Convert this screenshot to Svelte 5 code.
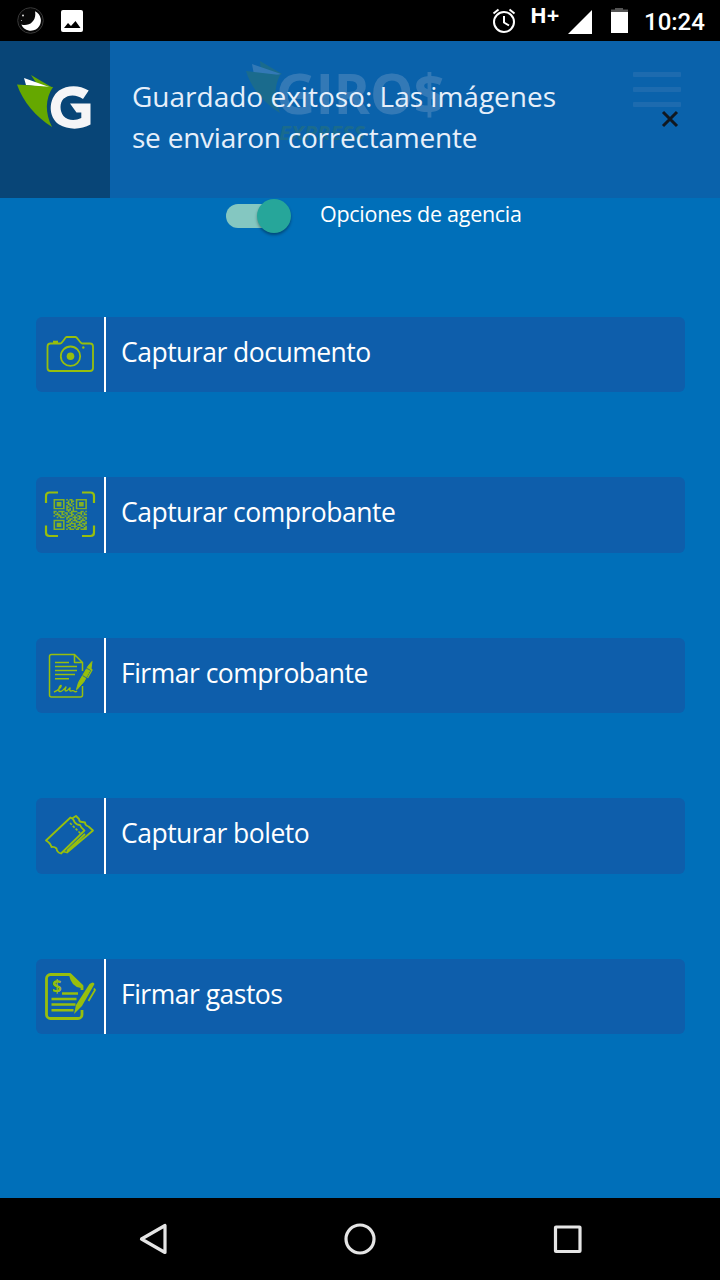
<script>
	let agencyOptions = true

	const actions = [
		{ icon: "camera", label: "Capturar documento" },
		{ icon: "qr", label: "Capturar comprobante" },
		{ icon: "sign", label: "Firmar comprobante" },
		{ icon: "ticket", label: "Capturar boleto" },
		{ icon: "expense", label: "Firmar gastos" },
	]

	const qrRows = [
		"111111101011001111111",
		"100000100101101000001",
		"101110101101001011101",
		"101110100110101011101",
		"101110101011001011101",
		"100000101100101000001",
		"111111101010101111111",
		"000000001110100000000",
		"110111100101111001101",
		"101001011011000111010",
		"011101101001101001011",
		"100110010111010110100",
		"001011101100111011011",
		"000000001011010110101",
		"111111100110111001110",
		"100000101101001111001",
		"101110100011110010111",
		"101110101110010111010",
		"101110101001111001101",
		"100000100110010110011",
		"111111101011101101111",
	]

	const qrPath = qrRows
		.flatMap((row, y) =>
			[...row].map((cell, x) => (cell === "1" ? `M${x} ${y}h1v1h-1z` : ""))
		)
		.join("")
</script>

<div class="screen">
	<div class="status-bar">
		<svg class="moon" width="28" height="28" viewBox="0 0 28 28">
			<circle cx="13.5" cy="13.5" r="12.8" fill="#080808" stroke="#383838" />
			<path d="M18 4.300A10.200 10.200 0 1 1 4.300 17.500C12 20 20 14 18 4.300Z" fill="#fff" />
			<circle cx="6" cy="8.500" r="1" fill="#ddd" />
			<circle cx="4.500" cy="13.500" r=".6" fill="#aaa" />
		</svg>
		<svg class="picture" width="22" height="22" viewBox="0 0 22 22">
			<rect width="22" height="22" rx="2" fill="#fff" />
			<path d="M3 18l4-5 3 3 4.500-5 5 7z" fill="#000" />
		</svg>
		<svg class="alarm" width="24" height="26" viewBox="0 0 24 26" fill="none" stroke="#fff" stroke-width="2">
			<circle cx="12" cy="14" r="10" />
			<path d="M12 8v6.500l5 3M1.500 5.500l5-4M22.500 5.500l-5-4" />
		</svg>
		<span class="network">H+</span>
		<svg class="signal" width="24" height="24" viewBox="0 0 24 24">
			<path d="M0 24L24 0v24z" fill="#fff" />
		</svg>
		<svg class="battery" width="17" height="25" viewBox="0 0 17 25">
			<path d="M0 4V1.500h4V0h8v1.500h5V4z" fill="#555" />
			<path d="M0 4h17v21H0z" fill="#fff" />
		</svg>
		<span class="clock">10:24</span>
	</div>

	<main>
		<header>
			<svg class="brand" width="220" height="90" viewBox="0 0 220 90">
				<path d="M30 0l22 13-20 8z" fill="#65a800" />
				<path d="M22 3l29 10-26 6z" fill="#fff" />
				<path d="M16 10l34 4c-6 12-6 24 0 38C34 42 21 27 16 10z" fill="#65a800" />
				<text class="giros" x="46" y="52.500" textLength="169" lengthAdjust="spacingAndGlyphs">GIRO$</text>
				<text class="express" x="49" y="79" textLength="86" lengthAdjust="spacingAndGlyphs">EXPRESS</text>
			</svg>
			<div class="menu">
				<span></span>
				<span></span>
				<span></span>
			</div>
		</header>

		<div class="toast">
			<div class="toast-logo">
				<svg width="76" height="56" viewBox="0 0 76 56">
					<path d="M14 0l22 13-12 2z" fill="#65a800" />
					<path d="M7 3l28 10-26-3z" fill="#fff" />
					<path d="M0 9.500l36 2.500c-8 12-8 26-1 40C19 42 6 27 0 9.500z" fill="#65a800" />
					<path
						d="M71.700 15.500C62 9.500 50 10 42 15.500C31 24 31 42 42 49.500C51 55 64 55 73.500 49.500V28.500H53L59.500 37.500H64.300V43C58 46 50.500 45.500 46.500 41C42.500 36 42.500 28 46.500 23.800C51.500 19 60 19.500 66 24z"
						fill="#f5f5f7"
					/>
				</svg>
			</div>
			<p>Guardado exitoso: Las imágenes<br /><span>se enviaron correctamente</span></p>
			<button class="close" aria-label="Cerrar">
				<svg width="18" height="18" viewBox="0 0 18 18">
					<path d="M2 2l14 14M16 2L2 16" stroke="#111820" stroke-width="3" />
				</svg>
			</button>
		</div>

		<label class="agency">
			<input type="checkbox" bind:checked={agencyOptions} />
			<span class="lever"></span>
			<span class="agency-label">Opciones de agencia</span>
		</label>

		<div class="actions">
			{#each actions as action}
				<div class="action">
					<div class="action-icon">
						<svg width="68" height="75" viewBox="0 0 68 75" fill="none" stroke="#97bf0d" stroke-width="1.800" stroke-linejoin="round">
							{#if action.icon === "camera"}
								<path d="M14.500 26.500h9.500c2.500 0 5-6.500 6.500-6.500h9c2 0 4.500 6.500 7 6.500h7.500a3 3 0 0 1 3 3V51a3 3 0 0 1-3 3h-39.500a3 3 0 0 1-3-3V29.500a3 3 0 0 1 3-3z" />
								<path d="M17 25.200h5" stroke-width="3" />
								<circle cx="34.500" cy="39.200" r="9.700" />
								<circle cx="34.500" cy="39.200" r="3.800" fill="#97bf0d" stroke="none" />
								<circle cx="47.300" cy="30.500" r="1.200" fill="#97bf0d" stroke="none" />
							{:else if action.icon === "qr"}
								<path d="M10 26v-7q0-3.500 3.500-3.500H22M46 15.500h8.500q3.500 0 3.500 3.500v7M10 48.500v7q0 3.500 3.500 3.500H22M46 59h8.500q3.500 0 3.500-3.500v-7" stroke-width="2.200" />
								<path class="qr-cells" d={qrPath} transform="translate(17.500 22) scale(1.590 1.480)" />
							{:else if action.icon === "sign"}
								<path d="M46.500 48v9a2 2 0 0 1-2 2H15.500a2 2 0 0 1-2-2V18.500a2 2 0 0 1 2-2h23l8 8V33M38.500 16.500v8h8" stroke-width="1.500" />
								<path d="M19 24.500h14M19 28.500h22M19 32.500h22M19 36.500h20M19 40.800h14" stroke-width="1.500" />
								<path d="M18 54c5-2 8-6 7-6.500s-4 6-1 6 6-5 6-4.500-2 4 0 4 4-4 4-3-1 3 1 3 2-1 3 0 2 1 3 0" stroke-width="1.400" />
								<path d="M40.500 51.500l2-7 10-17 3.500-4-1 7-7 13-7 8z" fill="#97bf0d" stroke-width="1" />
								<path d="M46.500 37.500l5 3M50 30l4 2" stroke="#0e5eab" stroke-width=".8" />
								<path d="M53 29l3 3-4.500 8" stroke-width="1.400" />
							{:else if action.icon === "ticket"}
								<path d="M10 42.500L34.500 19.500q3 1 4 4.500 2 3 5.500 3 1 3 4.500 5.500L25 55.500q-4-1-4.500-5-2-2-5-1.500-1-4-5.500-6.500z" />
								<path d="M36 20.500l4-2.500 3 3q0 3 3 3l3 .5q0 3 3.500 4l4.500 4L31 54.500l-4-1M49 36l-18 17" />
								<path d="M34 25l11 11" stroke-width="1.600" stroke-dasharray="2.500 1.500" />
							{:else}
								<path d="M46 51v4.500a4 4 0 0 1-4 4H14.500a4 4 0 0 1-4-4v-36a4 4 0 0 1 4-4H34L46 27v4" stroke-width="2.800" />
								<path d="M34 15.500L46 27l-1 1q-9-1-11-12z" fill="#97bf0d" />
								<path d="M26 34.500h16M15.500 40h25M15.500 45.500h24M15.500 51.200h22" stroke-width="2.400" />
								<path d="M38 55l2-9L53.500 25q4-3 5 0L46 47z" fill="#97bf0d" stroke="none" />
								<path d="M58 29.500l1 1.500-6.500 11" />
								<text class="dollar" x="16" y="33.500">$</text>
							{/if}
						</svg>
					</div>
					<span class="action-label">{action.label}</span>
				</div>
			{/each}
		</div>
	</main>

	<nav>
		<svg width="30" height="34" viewBox="0 0 30 34">
			<path d="M2.500 17L26 3.500v27z" />
		</svg>
		<svg class="home" width="34" height="34" viewBox="0 0 34 34">
			<circle cx="17" cy="17" r="14" />
		</svg>
		<svg width="30" height="30" viewBox="0 0 30 30">
			<rect x="2.500" y="3" width="24.500" height="24.500" rx=".5" />
		</svg>
	</nav>
</div>

<style>
	:global(body) {
		background: #000;
	}

	.screen {
		display: flex;
		flex-direction: column;
		width: 720px;
		height: 1280px;
		overflow: hidden;
		color: #fff;
		font-family: "Open Sans", "Noto Sans", sans-serif;
	}

	svg {
		display: block;
		flex: none;
	}

	.status-bar {
		display: flex;
		align-items: flex-start;
		box-sizing: border-box;
		height: 41px;
		padding: 7px 14px 0 17px;
		background: #000;
	}

	.picture {
		margin: 3px 0 0 16px;
	}

	.alarm {
		margin: 1px 0 0 auto;
	}

	.network {
		width: 29px;
		margin: -4px 9px 0 14px;
		font-size: 22px;
		font-weight: 700;
		line-height: 22px;
	}

	.signal {
		margin-top: 3px;
	}

	.battery {
		margin: 1px 16px 0 19px;
	}

	.clock {
		width: 62px;
		font: 500 24px/30px Roboto, sans-serif;
		white-space: nowrap;
	}

	main {
		position: relative;
		height: 1157px;
		background: #006fb9;
	}

	header {
		display: flex;
		justify-content: space-between;
		box-sizing: border-box;
		height: 157px;
		padding: 20px 39px 0 230px;
	}

	.brand {
		overflow: visible;
	}

	.giros {
		fill: #fff;
		font: 700 56px "Open Sans", sans-serif;
	}

	.express {
		fill: #65a800;
		font: italic 700 19px "Open Sans", sans-serif;
	}

	.menu {
		display: flex;
		flex-direction: column;
		gap: 10px;
		width: 48px;
		padding-top: 11px;
	}

	.menu span {
		height: 5px;
		border-radius: 1px;
		background: #79a9d5;
	}

	.toast {
		position: absolute;
		top: 0;
		left: 0;
		display: flex;
		width: 720px;
		height: 157px;
		background: rgba(12, 95, 168, 0.84);
	}

	.toast-logo {
		box-sizing: border-box;
		width: 110px;
		padding: 34px 0 0 17px;
		background: #084577;
	}

	.toast p {
		margin: 35px 0 0 22px;
		color: #e6effa;
		font-size: 28px;
		line-height: 41px;
		white-space: nowrap;
	}

	.toast p span {
		letter-spacing: -0.23px;
	}

	.close {
		width: 18px;
		height: 18px;
		margin: 69px 41px 0 auto;
		padding: 0;
		border: 0;
		background: none;
	}

	.agency {
		display: flex;
		height: 36px;
		padding-left: 226px;
	}

	.agency input {
		position: absolute;
		opacity: 0;
	}

	.lever {
		position: relative;
		width: 62px;
		height: 24px;
		margin: 6px 32px 0 0;
		border-radius: 12px;
		background: #84c7c1;
	}

	.lever::after {
		content: "";
		position: absolute;
		top: -5px;
		left: 0;
		width: 34px;
		height: 34px;
		border-radius: 50%;
		background: #26a69a;
		box-shadow: 0 2px 3px rgba(0, 0, 0, 0.35);
	}

	input:checked + .lever::after {
		left: 31px;
	}

	.agency-label {
		font-size: 21.5px;
		letter-spacing: -0.28px;
		line-height: 31px;
		white-space: nowrap;
	}

	.actions {
		display: flex;
		flex-direction: column;
		gap: 85.1px;
		padding: 83px 35px 0 36px;
	}

	.action {
		display: flex;
		height: 75.4px;
		border-radius: 6px;
		background: #0e5eab;
	}

	.action-icon {
		width: 68px;
		border-right: 2px solid #fff;
	}

	.action-label {
		padding-left: 15px;
		font-size: 26.5px;
		letter-spacing: -0.5px;
		line-height: 71px;
		white-space: nowrap;
	}

	.qr-cells {
		fill: #97bf0d;
		stroke: none;
		opacity: 0.85;
	}

	.dollar {
		fill: #97bf0d;
		stroke: none;
		font: 700 17px "Open Sans", sans-serif;
	}

	nav {
		display: flex;
		align-items: center;
		justify-content: space-between;
		box-sizing: border-box;
		height: 82px;
		padding: 0 137px 0 139px;
		background: #000;
	}

	nav svg {
		fill: none;
		stroke: #e5e5e5;
		stroke-width: 3.2;
		stroke-linejoin: round;
	}

	.home {
		margin-right: 3px;
	}
</style>
